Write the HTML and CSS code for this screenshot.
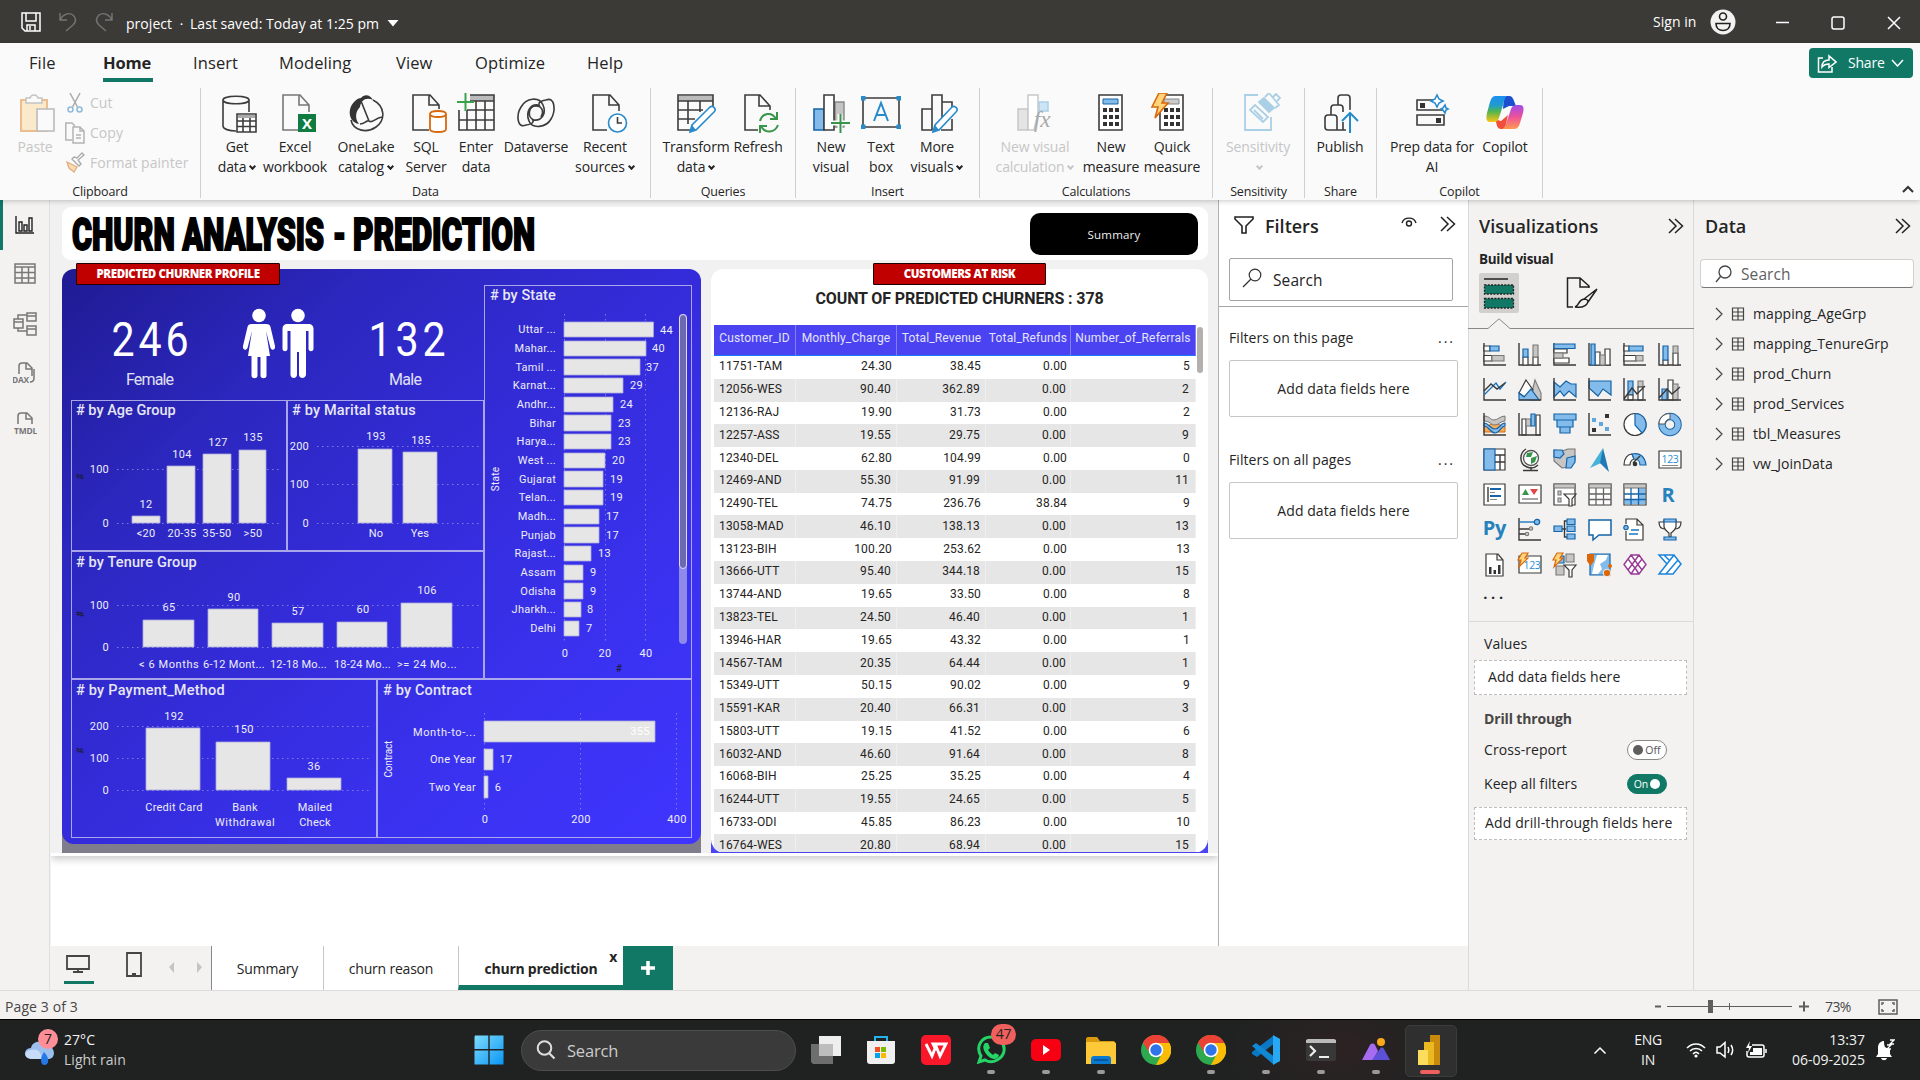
FILE: index.html
```html
<!DOCTYPE html>
<html lang="en">
<head>
<meta charset="utf-8">
<title>project - Power BI Desktop</title>
<link rel="stylesheet" href="styles.css">
</head>
<body>
<header class="titlebar">
  <svg class="tb-save" width="20" height="20" viewBox="0 0 20 20"><path class="lw" d="M1 1H19V19H4L1 16ZM5 1V9H15V1M6 19V13H14V19M9 14V18"/></svg>
  <svg class="tb-undo" width="18" height="20" viewBox="0 0 18 20"><path class="lg" d="M1 1V8H8M1 8C4 2 10 0 14 3C18 7 17 10 14 13L7 19"/></svg>
  <svg class="tb-redo" width="18" height="20" viewBox="0 0 18 20"><path class="lg" d="M17 1V8H10M17 8C14 2 8 0 4 3C0 7 1 10 4 13L11 19"/></svg>
  <span class="doc">project</span><span class="bull">•</span><span class="saved">Last saved: Today at 1:25 pm</span>
  <svg class="tb-caret" width="12" height="7" viewBox="0 0 12 7"><path fill="#fff" d="M.5 0H11.500L6 6.500Z"/></svg>
  <span class="signin">Sign in</span>
  <svg class="avatar" width="26" height="26" viewBox="0 0 26 26"><circle cx="13" cy="13" r="12.500" fill="#f3f2f1"/><circle cx="13" cy="7.500" r="3.500" fill="none" stroke="#222" stroke-width="1.600"/><path d="M6 14.500H20C20 19 17 21.500 13 21.500S6 19 6 14.500Z" fill="none" stroke="#222" stroke-width="1.600"/></svg>
  <svg class="wc" width="126" height="16" viewBox="0 0 126 16"><path class="lw" d="M1 7.500H14M113 2L125 14M125 2L113 14"/><rect class="lw" x="57" y="2" width="12" height="12" rx="2"/></svg>
</header>

<section class="ribbon">
  <nav class="menu">
    <span class="m1">File</span><span class="m2 on">Home</span><span class="m3">Insert</span><span class="m4">Modeling</span><span class="m5">View</span><span class="m6">Optimize</span><span class="m7">Help</span>
    <button class="share"><svg width="20" height="20" viewBox="0 0 20 20"><path class="lw" d="M6 5H1.500V19H15V14M5 14C5 9 8 7 12 7V3L19 9L12 14.500V11C9 11 7 11.500 5 14Z"/></svg><span>Share</span><svg width="13" height="8" viewBox="0 0 13 8"><path class="lw" d="M1 1L6.500 7L12 1"/></svg></button>
  </nav>
  <div class="groups">
    <div class="grp g-clip">
      <div class="tools">
        <div class="tool off"><svg class="r2" width="40" height="40" viewBox="0 0 40 40"><path fill="#fbe9cc" stroke="#edbd8e" stroke-width="2" d="M4 7H30V38H4Z"/><path fill="#fafafa" stroke="#c4c4c4" stroke-width="1.500" d="M9 10V5H13C14 1 20 1 21 5H25V10Z"/><path fill="#fafafa" stroke="#bbb" stroke-width="1.600" d="M20 16H37V38H20Z"/></svg><span>Paste</span></div>
        <div class="clip off">
          <div><svg width="20" height="22" viewBox="0 0 20 22"><path fill="none" stroke="#aaa" stroke-width="1.500" d="M5 1L12.500 15M15 1L7.500 15"/><circle cx="5.500" cy="17.500" r="2.500" fill="none" stroke="#91bcd9" stroke-width="1.600"/><circle cx="14.500" cy="17.500" r="2.500" fill="none" stroke="#91bcd9" stroke-width="1.600"/></svg><span>Cut</span></div>
          <div><svg width="20" height="22" viewBox="0 0 20 22"><path fill="none" stroke="#b4b4b4" stroke-width="1.500" d="M7 18H.8V1H7L10 4M8 5H15L19 9V21H8ZM15 5V9H19M11 13H16M11 16H16"/></svg><span>Copy</span></div>
          <div><svg width="20" height="22" viewBox="0 0 20 22"><path fill="#f8dcb4" stroke="#e2ae7e" stroke-width="1.300" d="M2 10L12 15L9 20L4 16Z"/><path fill="#fff" stroke="#aaa" stroke-width="1.400" d="M7 7L14 14L16 12L13 8L19 3L17 1L12 6L9 5Z"/></svg><span>Format painter</span></div>
        </div>
      </div>
      <div class="cap">Clipboard</div>
    </div>
    <div class="grp g-data">
      <div class="tools">
        <div class="tool"><svg class="r2" width="40" height="40" viewBox="0 0 40 40"><path class="d" d="M4 7C4 2 30 2 30 7S4 12 4 7V33C4 36 10 38 17 38M30 7V19"/><path fill="#fff" class="d" d="M18 21H37V39H18ZM18 28H37M18 33.500H37M24 25V39M31 25V39"/><path fill="#aaa" d="M19 22H36V25H19Z"/></svg><span>Get<br>data<i></i></span></div>
        <div class="tool"><svg class="r4" width="40" height="40" viewBox="0 0 40 40"><path class="gy" d="M20 37H4V2H21L30 12V19M20 2V12H30"/><path fill="#107c41" d="M19 21H37V39H19Z"/><text x="28" y="35.500" font-size="15" font-weight="700" fill="#fff" text-anchor="middle">X</text></svg><span>Excel<br>workbook</span></div>
        <div class="tool"><svg width="40" height="40" viewBox="0 0 40 40"><path fill="#333" d="M15 5C18 1 24 1 27 7C20 4 15 7 14 14C9 19 9 26 13 31C2 29 1 15 9 8C11 6 13 5 15 5Z"/><path class="d" d="M27 7C39 13 40 27 30 34C20 41 7 37 5 27M15 8L23 28C26 31 29 25 36 24M14 31C19 31 20 27 23 28"/></svg><span>OneLake<br>catalog<i></i></span></div>
        <div class="tool"><svg class="r3" width="40" height="40" viewBox="0 0 40 40"><path class="d" d="M20 37H4V2H21L30 12V16M20 2V12H30"/><path fill="#fff" stroke="#d9680c" stroke-width="1.800" d="M21 21C21 17 37 17 37 21S21 25 21 21V36C21 40 37 40 37 36V21"/></svg><span>SQL<br>Server</span></div>
        <div class="tool"><svg width="40" height="40" viewBox="0 0 40 40"><path fill="#bbb" d="M14 2H38V8H14Z"/><path class="d" d="M14 2H38V37H3V17M14 8H38M11 17V37M20 8V37M29 8V37M3 27H38M11 17H38"/><path stroke="#38a34c" stroke-width="2" d="M1 9H18M9.500 0V18"/></svg><span>Enter<br>data</span></div>
        <div class="tool"><svg width="40" height="40" viewBox="0 0 40 40"><path class="d" d="M10 32C1 36 0 22 5 14C10 5 23 3 27 12C31 21 25 28 18 27C11 25 12 13 20 13C27 13 28 20 25 24M30 7C39 3 40 18 35 26C30 35 16 36 13 28C9 18 15 11 22 12M10 32C18 31 18 28 16 26M30 7C22 8 22 11 24 14"/></svg><span>Dataverse</span></div>
        <div class="tool"><svg class="r4" width="40" height="40" viewBox="0 0 40 40"><path class="d" d="M18 37H4V2H21L30 12V18M20 2V12H30"/><circle cx="28.500" cy="30" r="9" fill="#fff" stroke="#268acb" stroke-width="1.600"/><path class="d" d="M28.500 24V30H33"/></svg><span>Recent<br>sources<i></i></span></div>
      </div>
      <div class="cap">Data</div>
    </div>
    <div class="grp g-query">
      <div class="tools">
        <div class="tool"><svg width="40" height="40" viewBox="0 0 40 40"><path fill="#bbb" d="M2 3H37V8H2Z"/><path class="d" d="M15 37H2V2H37V13M2 8H37M2 17H27M2 26H19M12 8V31M24 8V19"/><path class="pen" d="M14 39L16 32L34 14C37 12 41 16 38 19L20 37Z"/><path fill="#268acb" d="M14 39L16 32L20 37Z"/></svg><span>Transform<br>data<i></i></span></div>
        <div class="tool"><svg class="r3" width="40" height="40" viewBox="0 0 40 40"><path class="d" d="M17 37H4V2H19L29 13V17M18 2V13H29"/><path fill="none" stroke="#38964a" stroke-width="2" d="M19 28C21 20 31 18 35 26M36 19V26H29M37 32C34 40 24 41 20 33M19 40V33H26"/></svg><span>Refresh</span></div>
      </div>
      <div class="cap">Queries</div>
    </div>
    <div class="grp g-ins">
      <div class="tools">
        <div class="tool"><svg width="40" height="40" viewBox="0 0 40 40"><path fill="#83bceb" stroke="#1664a7" stroke-width="1.600" d="M3 16H13V37H3Z"/><path fill="#c4c4c4" stroke="#888" stroke-width="1.400" d="M24 9H33V34H24Z"/><path class="d" fill="#fff" d="M13 2H23V37H13Z"/><path stroke="#fafafa" stroke-width="5" d="M20 30H38M29 21V39"/><path stroke="#38964a" stroke-width="2" d="M20 30H39M29.500 21V40"/></svg><span>New<br>visual</span></div>
        <div class="tool"><svg width="40" height="40" viewBox="0 0 40 40"><path class="d" d="M2 5H38V34H2Z"/><path fill="#268acb" d="M0 3H4.500V7.500H0ZM35.500 3H40V7.500H35.500ZM0 31.500H4.500V36H0ZM35.500 31.500H40V36H35.500Z"/><path fill="none" stroke="#268acb" stroke-width="2" d="M13 28L20 10L27 28M15.500 22H24.500"/></svg><span>Text<br>box</span></div>
        <div class="tool"><svg class="r2" width="40" height="40" viewBox="0 0 40 40"><path class="d" d="M3 16H13V37H3ZM13 16V2H23V26M23 9H33V15M33 26V37H22"/><path class="pen" d="M14 39L16 32L33 14C36 12 40 16 37 19L20 37Z"/><path fill="#268acb" d="M14 39L16 32L20 37Z"/></svg><span>More<br>visuals<i></i></span></div>
      </div>
      <div class="cap">Insert</div>
    </div>
    <div class="grp g-calc">
      <div class="tools">
        <div class="tool off"><svg width="40" height="40" viewBox="0 0 40 40"><path fill="#e4e4e4" stroke="#c8c8c8" stroke-width="1.500" d="M3 16H13V37H3Z"/><path fill="#cde4f6" stroke="#a9cfe8" stroke-width="1.500" d="M24 9H33V18H24Z"/><path fill="#fff" stroke="#c8c8c8" stroke-width="1.500" d="M13 37V2H23V20L19 37Z"/><text x="19" y="34" font-size="23" font-style="italic" font-family="Liberation Serif, serif" fill="#a8a8a8">fx</text></svg><span>New visual<br>calculation<i></i></span></div>
        <div class="tool"><svg width="40" height="40" viewBox="0 0 40 40"><path class="d" fill="#fff" d="M8 2H31V37H8Z"/><path fill="#83bceb" stroke="#1664a7" d="M12 6H27V11H12Z"/><g id="keys" fill="#333"><path d="M12 15h4v4h-4zM18 15h4v4h-4zM24 15h4v4h-4zM12 22h4v4h-4zM18 22h4v4h-4zM24 22h4v4h-4zM12 29h4v4h-4zM18 29h4v4h-4zM24 29h4v4h-4z"/></g></svg><span>New<br>measure</span></div>
        <div class="tool"><svg class="l4" width="40" height="40" viewBox="0 0 40 40"><path class="d" fill="#fff" d="M12 2H35V37H12Z"/><path fill="#ccc" stroke="#888" d="M16 6H31V11H16Z"/><use href="#keys" x="4"/><path fill="#ffd47a" stroke="#d9680c" stroke-width="1.600" d="M11 0H19L14 10H20L7 25L10 14H4Z"/></svg><span>Quick<br>measure</span></div>
      </div>
      <div class="cap">Calculations</div>
    </div>
    <div class="grp g-sens">
      <div class="tools"><div class="tool off"><svg class="r3" width="40" height="40" viewBox="0 0 40 40"><g fill="none" stroke="#abd0e6" stroke-width="1.800"><path d="M17 2H4V37H30V24"/><path d="M9 17L14 12L27 24L22 29ZM13 17L22 26"/><path fill="#abd0e6" d="M18 9L23 5L33 15L28 19Z"/><path d="M24 4L28 0L38 12L34 15M32 4L35 1L39 5L36 8"/></g></svg><span>Sensitivity<br><i></i></span></div></div>
      <div class="cap">Sensitivity</div>
    </div>
    <div class="grp g-share">
      <div class="tools"><div class="tool"><svg class="r2" width="40" height="40" viewBox="0 0 40 40"><path class="d" d="M3 25C3 23 4 22 6 22H12C14 22 15 23 15 25V37H6C4 37 3 36 3 34ZM9 22V15C9 13 10 12 12 12H18C20 12 21 13 21 15V19M16 12V5C16 3 17 2 19 2H25C27 2 28 3 28 5V17M15 37H24M21 29V37"/><path fill="none" stroke="#fafafa" stroke-width="5" d="M28 40V21M21 27L28 20L35 27"/><path fill="none" stroke="#268acb" stroke-width="2" d="M28 40V21M20 28L28 20L36 28"/></svg><span>Publish</span></div></div>
      <div class="cap">Share</div>
    </div>
    <div class="grp g-cop">
      <div class="tools">
        <div class="tool"><svg width="40" height="40" viewBox="0 0 40 40"><path class="d" d="M22 7H5V17H32V15M5 22H32V32H5Z"/><path fill="#333" d="M8 10H13V15H8ZM24 25H29V30H24Z"/><path fill="#fff" stroke="#268acb" stroke-width="1.600" d="M25 2L27 6L31 8L27 10L25 14L23 10L19 8L23 6ZM33 12L34 15L36 16L34 17L33 20L31 17L29 16L31 15Z"/></svg><span>Prep data for<br>AI</span></div>
        <div class="tool"><svg width="40" height="40" viewBox="0 0 40 40"><defs><linearGradient id="c1" x1="0" y1="0" x2="0" y2="1"><stop offset="0" stop-color="#1d8ff0"/><stop offset=".35" stop-color="#1f9bd0"/><stop offset=".6" stop-color="#51b64c"/><stop offset="1" stop-color="#ffc415"/></linearGradient><linearGradient id="c2" x1="0" y1="0" x2="0" y2="1"><stop offset="0" stop-color="#a04be8"/><stop offset=".5" stop-color="#ee5299"/><stop offset="1" stop-color="#ff9a50"/></linearGradient></defs><path fill="#1b4fd0" d="M19 3H24C27 3 28 5 29 8L31 13H24L18 16Z"/><path fill="#f0503c" d="M9 26L16 28L23 22L20 36H16C12 36 12 32 11 29Z"/><path fill="url(#c1)" d="M10 3H22C20 4 19 8 18 12L14 25C13 28 11 29 8 29H5C1 29 1 25 2 20L5 9C6 5 8 3 10 3Z"/><path fill="url(#c2)" d="M32 12H35C39 12 39 16 38 20L35 30C34 34 32 36 29 36H17C20 35 21 31 22 28L26 16C27 13 29 12 32 12Z"/></svg><span>Copilot</span></div>
      </div>
      <div class="cap">Copilot</div>
    </div>
    <svg class="fold" width="12" height="8" viewBox="0 0 12 8"><path fill="none" stroke="#333" stroke-width="2" d="M1 7L6 2L11 7"/></svg>
  </div>
</section>

<main class="main">
  <aside class="rail">
    <svg width="24" height="24" viewBox="0 0 24 24"><path fill="none" stroke="#222" stroke-width="1.400" d="M3 4V21H21M6 10H9V19H6ZM11 13H14V19H11ZM16 6H19V19H16Z"/></svg>
    <svg width="24" height="24" viewBox="0 0 24 24"><path class="rl" d="M2 2H22V21H2ZM2 5H22M2 10.500H22M2 16H22M9 5V21M15.500 5V21"/></svg>
    <svg width="24" height="24" viewBox="0 0 24 24"><path class="rl" d="M1 7H10V16H1ZM1 10H10M14 1H23V9H14ZM14 4H23M14 14H23V23H14ZM14 17H23M5 7V3H14M5 16V19H14"/></svg>
    <svg width="24" height="24" viewBox="0 0 24 24"><path class="rl" d="M6 12V4C6 2 7 1 9 1H14L19 6V14M13 1V7H19M21 7V16C21 19 19 20 17 20"/><text x="-1" y="21" textLength="17" lengthAdjust="spacingAndGlyphs">DAX</text></svg>
    <svg width="24" height="24" viewBox="0 0 24 24"><path class="rl" d="M5 12V4C5 2 6 1 8 1H14L19 6V12M13 1V7H19"/><text x="1" y="22" textLength="23" lengthAdjust="spacingAndGlyphs">TMDL</text></svg>
  </aside>

  <section class="work">
    <div class="canvas">
      <div class="page">
        <div class="headcard">
          <svg class="headline" width="480" height="53" viewBox="0 0 480 53"><text x="10" y="42.500" textLength="252" lengthAdjust="spacingAndGlyphs">CHURN ANALYSIS</text><text x="271" y="42.500" textLength="13" lengthAdjust="spacingAndGlyphs">-</text><text x="291" y="42.500" textLength="182" lengthAdjust="spacingAndGlyphs">PREDICTION</text></svg>
          <button class="sumbtn">Summary</button>
        </div>
        <div class="cols">
          <div class="profwrap">
            <div class="tag tagl">PREDICTED CHURNER PROFILE</div>
            <div class="profile">
              <div class="upper">
                <div class="ucol">
                  <svg class="kpi" width="413" height="115" viewBox="71 285 413 115">
                    <text class="big" transform="translate(111.500 356) scale(.84 1)">246</text><text class="big" transform="translate(368.500 356) scale(.84 1)">132</text>
                    <text class="sub" x="126" y="384.500" textLength="48">Female</text><text class="sub" x="389" y="384.500" textLength="33">Male</text>
                    <g fill="#fff"><circle cx="259" cy="315.500" r="6.800"/><path d="M252 324H266C269 324 270 325 270.500 327L275 346C275.500 350 272 351 270.500 348L266 331L270 356H266.500V376C266 379 261 379 260.500 376V357H257.500V376C257 379 252 379 251.500 376V356H248L252 331L247.500 348C246 351 242.500 350 243 346L247.500 327C248 325 249 324 252 324Z"/><circle cx="298" cy="315.500" r="6.800"/><path d="M288 324H308C312 324 313.500 326 313.500 329V349C313 352 309 352 308.500 349V331H306V375C305 379 299.500 379 299 375V352H297V375C296.500 379 291 379 290.500 375V331H287.500V349C287 352 283 352 282.500 349V329C282.500 326 284 324 288 324Z"/></g>
                  </svg>
                  <div class="pair">
                    <svg class="chart" width="216" height="151" viewBox="71 400 216 151"><text class="t" x="76" y="410" textLength="100">&#35; by Age Group</text>
                      <path class="g" d="M117 469.500H280M117 523.500H280"/><g class="b"><path d="M132 516H160V523H132ZM167 466H195V523H167ZM203 454H231V523H203ZM239 450H266V523H239Z"/></g>
                      <g class="e"><text x="109" y="469">100</text><text x="109" y="523">0</text></g><g class="m"><text x="146" y="504">12</text><text x="182" y="454">104</text><text x="218" y="442">127</text><text x="253" y="437">135</text><text x="146" y="533">&lt;20</text><text x="182" y="533">20-35</text><text x="217" y="533">35-50</text><text x="253" y="533">&gt;50</text></g><text class="h" transform="translate(80 476.500) rotate(-90)">#</text></svg>
                    <svg class="chart" width="197" height="151" viewBox="287 400 197 151"><text class="t" x="292" y="410" textLength="124">&#35; by Marital status</text>
                      <path class="g" d="M317 446.500H480M317 484.500H480M317 523.500H480"/><path class="b" d="M358 449H392V523H358ZM403 452H437V523H403Z"/>
                      <g class="e"><text x="309" y="446">200</text><text x="309" y="484">100</text><text x="309" y="523">0</text></g><g class="m"><text x="376" y="436">193</text><text x="421" y="440">185</text><text x="376" y="533">No</text><text x="420" y="533">Yes</text></g></svg>
                  </div>
                  <svg class="chart" width="413" height="128" viewBox="71 551 413 128"><text class="t" x="76" y="562" textLength="121">&#35; by Tenure Group</text>
                    <path class="g" d="M117 605.500H480M117 647.500H480"/><path class="b" d="M143 620H194V647H143ZM208 609H258V647H208ZM272 623H323V647H272ZM337 622H387V647H337ZM401 603H452V647H401Z"/>
                    <g class="e"><text x="109" y="605">100</text><text x="109" y="647">0</text></g><g class="m"><text x="169" y="607">65</text><text x="234" y="597">90</text><text x="298" y="611">57</text><text x="363" y="609">60</text><text x="427" y="590">106</text></g>
                    <g><text x="139" y="664" textLength="60">&lt; 6 Months</text><text x="203" y="664" textLength="62">6-12 Mont...</text><text x="270" y="664" textLength="57">12-18 Mo...</text><text x="334" y="664" textLength="57">18-24 Mo...</text><text x="397" y="664" textLength="60">&gt;= 24 Mo...</text></g><text class="h" transform="translate(80 614) rotate(-90)">#</text></svg>
                </div>
                <svg class="chart state" width="208" height="394" viewBox="484 285 208 394"><text class="t" x="490" y="295" textLength="66">&#35; by State</text>
                  <path class="g" d="M564.500 314V644M605.500 314V644M645.500 314V644"/>
                  <path class="b" d="M564 322H653.500V337H564ZM564 341H646V356H564ZM564 359H640V375H564ZM564 378H623V393H564ZM564 397H613V412H564ZM564 415H611V431H564ZM564 434H611V449H564ZM564 453H605V468H564ZM564 471H603V487H564ZM564 490H603V505H564ZM564 509H599V524H564ZM564 527H599V543H564ZM564 546H591V561H564ZM564 565H583V580H564ZM564 583H583V599H564ZM564 602H581V617H564ZM564 621H579V636H564Z"/>
                  <g class="e"><text x="556" y="329">Uttar ...</text><text x="556" y="348">Mahar...</text><text x="556" y="367">Tamil ...</text><text x="556" y="385">Karnat...</text><text x="556" y="404">Andhr...</text><text x="556" y="423">Bihar</text><text x="556" y="441">Harya...</text><text x="556" y="460">West ...</text><text x="556" y="479">Gujarat</text><text x="556" y="497">Telan...</text><text x="556" y="516">Madh...</text><text x="556" y="535">Punjab</text><text x="556" y="553">Rajast...</text><text x="556" y="572">Assam</text><text x="556" y="591">Odisha</text><text x="556" y="609">Jharkh...</text><text x="556" y="628">Delhi</text></g>
                  <g><text x="660" y="330">44</text><text x="652" y="348">40</text><text x="646" y="367">37</text><text x="630" y="385">29</text><text x="620" y="404">24</text><text x="618" y="423">23</text><text x="618" y="441">23</text><text x="612" y="460">20</text><text x="610" y="479">19</text><text x="610" y="497">19</text><text x="606" y="516">17</text><text x="606" y="535">17</text><text x="598" y="553">13</text><text x="590" y="572">9</text><text x="590" y="591">9</text><text x="587" y="609">8</text><text x="586" y="628">7</text></g>
                  <g class="m"><text x="565" y="653">0</text><text x="605" y="653">20</text><text x="646" y="653">40</text><text class="v" transform="translate(495 479) rotate(-90)">State</text></g><text class="h" x="619" y="668">#</text>
                  <rect x="679" y="314" width="8" height="330" rx="4" fill="#8f89ea"/><rect x="679.500" y="314.500" width="7" height="254" rx="3.500" fill="#6d69ae" stroke="#dedcfa"/></svg>
              </div>
              <div class="pair">
                <svg class="chart" width="306" height="159" viewBox="71 679 306 159"><text class="t" x="76" y="690" textLength="149">&#35; by Payment_Method</text>
                  <path class="g" d="M117 726.500H371M117 758.500H371M117 790.500H371"/><path class="b" d="M146 728H200V790H146ZM216 742H270V790H216ZM287 778H341V790H287Z"/>
                  <g class="e"><text x="109" y="726">200</text><text x="109" y="758">100</text><text x="109" y="790">0</text></g><g class="m"><text x="174" y="716">192</text><text x="244" y="729">150</text><text x="314" y="766">36</text><text x="174" y="807">Credit Card</text><text x="245" y="807">Bank</text><text x="245" y="822" textLength="60">Withdrawal</text><text x="315" y="807">Mailed</text><text x="315" y="822">Check</text></g><text class="h" transform="translate(80 750.500) rotate(-90)">#</text></svg>
                <svg class="chart last" width="315" height="159" viewBox="377 679 315 159"><text class="t" x="383" y="690" textLength="89">&#35; by Contract</text>
                  <path class="g" d="M484.500 713V812M580.500 713V812M676.500 713V812"/><path class="b" d="M484 721H655V742H484ZM484 749H493V770H484ZM484 776H488V798H484Z"/>
                  <g class="e"><text x="476" y="732" textLength="63">Month-to-...</text><text x="476" y="759">One Year</text><text x="476" y="787">Two Year</text></g><g class="m"><text class="in" x="640" y="731">355</text><text x="506" y="759">17</text><text x="498" y="787">6</text><text x="485" y="819">0</text><text x="581" y="819">200</text><text x="677" y="819">400</text><text class="v" transform="translate(388 759) rotate(-90)" textLength="37">Contract</text></g></svg>
              </div>
            </div>
          </div>
          <div class="riskwrap">
            <div class="tag tagr">CUSTOMERS AT RISK</div>
            <div class="risk">
              <div class="count">COUNT OF PREDICTED CHURNERS : 378</div>
              <div class="tblrow">
              <table>
                <thead><tr><th>Customer_ID</th><th>Monthly_Charge</th><th>Total_Revenue</th><th>Total_Refunds</th><th>Number_of_Referrals</th></tr></thead>
                <tbody>
                <tr><td>11751-TAM</td><td>24.30</td><td>38.45</td><td>0.00</td><td>5</td></tr>
                <tr><td>12056-WES</td><td>90.40</td><td>362.89</td><td>0.00</td><td>2</td></tr>
                <tr><td>12136-RAJ</td><td>19.90</td><td>31.73</td><td>0.00</td><td>2</td></tr>
                <tr><td>12257-ASS</td><td>19.55</td><td>29.75</td><td>0.00</td><td>9</td></tr>
                <tr><td>12340-DEL</td><td>62.80</td><td>104.99</td><td>0.00</td><td>0</td></tr>
                <tr><td>12469-AND</td><td>55.30</td><td>91.99</td><td>0.00</td><td>11</td></tr>
                <tr><td>12490-TEL</td><td>74.75</td><td>236.76</td><td>38.84</td><td>9</td></tr>
                <tr><td>13058-MAD</td><td>46.10</td><td>138.13</td><td>0.00</td><td>13</td></tr>
                <tr><td>13123-BIH</td><td>100.20</td><td>253.62</td><td>0.00</td><td>13</td></tr>
                <tr><td>13666-UTT</td><td>95.40</td><td>344.18</td><td>0.00</td><td>15</td></tr>
                <tr><td>13744-AND</td><td>19.65</td><td>33.50</td><td>0.00</td><td>8</td></tr>
                <tr><td>13823-TEL</td><td>24.50</td><td>46.40</td><td>0.00</td><td>1</td></tr>
                <tr><td>13946-HAR</td><td>19.65</td><td>43.32</td><td>0.00</td><td>1</td></tr>
                <tr><td>14567-TAM</td><td>20.35</td><td>64.44</td><td>0.00</td><td>1</td></tr>
                <tr><td>15349-UTT</td><td>50.15</td><td>90.02</td><td>0.00</td><td>9</td></tr>
                <tr><td>15591-KAR</td><td>20.40</td><td>66.31</td><td>0.00</td><td>3</td></tr>
                <tr><td>15803-UTT</td><td>19.15</td><td>41.52</td><td>0.00</td><td>6</td></tr>
                <tr><td>16032-AND</td><td>46.60</td><td>91.64</td><td>0.00</td><td>8</td></tr>
                <tr><td>16068-BIH</td><td>25.25</td><td>35.25</td><td>0.00</td><td>4</td></tr>
                <tr><td>16244-UTT</td><td>19.55</td><td>24.65</td><td>0.00</td><td>5</td></tr>
                <tr><td>16733-ODI</td><td>45.85</td><td>86.23</td><td>0.00</td><td>10</td></tr>
                <tr><td>16764-WES</td><td>20.80</td><td>68.94</td><td>0.00</td><td>15</td></tr>
                </tbody>
              </table>
              <div class="thumb"></div>
              </div>
            </div>
          </div>
        </div>
      </div>
    </div>
    <div class="filters">
      <div class="fhead"><svg width="20" height="19" viewBox="0 0 20 19"><path fill="none" stroke="#222" stroke-width="1.600" d="M1 1H19V3L12 10V17H8V10L1 3Z"/></svg><b>Filters</b><svg class="eye" width="16" height="12" viewBox="0 0 16 12"><path fill="none" stroke="#222" stroke-width="1.400" d="M1 7C3 .5 13 .5 15 7"/><circle cx="8" cy="7.500" r="2.500" fill="none" stroke="#222" stroke-width="1.400"/></svg><svg width="16" height="16" viewBox="0 0 16 16"><path class="ch" d="M1 1L8 8L1 15M7 1L14.500 8L7 15"/></svg></div>
      <div class="fsearch"><svg width="20" height="20" viewBox="0 0 20 20"><circle cx="13" cy="7" r="5.800" fill="none" stroke="#333" stroke-width="1.200"/><path stroke="#333" stroke-width="1.200" d="M9 11L1 19"/></svg><span>Search</span></div>
      <div class="fbody">
        <div class="flab"><span>Filters on this page</span><span class="dots">...</span></div><div class="fbox">Add data fields here</div>
        <div class="flab two"><span>Filters on all pages</span><span class="dots">...</span></div><div class="fbox">Add data fields here</div>
      </div>
    </div>
    <nav class="tabs">
      <svg class="dev" width="161" height="44" viewBox="50 946 161 44"><path fill="none" stroke="#444" stroke-width="1.800" d="M67 956H89V969H67ZM78 969V972M73 972H83M127 953H141V976H127ZM132 974H136"/><path fill="#117865" d="M64 981H94V984H64Z"/><path fill="#c4c4c4" d="M169 967L174 962V973ZM202 967L197 962V973Z"/></svg>
      <span class="tab ta">Summary</span><span class="tab tbb">churn reason</span><span class="tab tc">churn prediction<em>x</em></span><span class="plus"><svg width="16" height="16" viewBox="0 0 16 16"><path stroke="#fff" stroke-width="3.500" d="M8 1V15M1 8H15"/></svg></span>
    </nav>
  </section>

  <section class="viz">
    <div class="phead"><b>Visualizations</b><svg width="16" height="16" viewBox="0 0 16 16"><path class="ch" d="M1 1L8 8L1 15M7 1L14.500 8L7 15"/></svg></div>
    <div class="build">Build visual</div>
    <div class="modes"><span class="mode"><svg width="32" height="32" viewBox="0 0 32 32"><path stroke="#222" stroke-width="1.500" d="M1 2H25"/><path fill="#117865" stroke="#222" stroke-width="1.300" stroke-dasharray="2 1.300" d="M1.500 8H30.500V17H1.500ZM1.500 21.500H30.500V31H1.500Z"/></svg></span><svg class="fmt" width="32" height="32" viewBox="0 0 32 32"><path fill="none" stroke="#222" stroke-width="1.500" d="M7 30H1.500V1H14L23 9V11M14 1V10H23M31 12L18 22M31 12L22 25M18 22C22 22 22 25 22 25C20 30 16 31 9 30C13 29 12 23 18 22Z"/></svg></div>
    <svg class="notch" width="226" height="12" viewBox="0 0 226 12"><path fill="none" stroke="#8a8886" d="M0 10.500H20L31 .8L42 10.500H226"/></svg>
    <div class="icons">
      <svg viewBox="0 0 24 24"><path class="a" d="M1 0V22H23"/><path class="w" d="M1 3H7V8H1ZM1 12.500H9V18H1Z"/><path class="bl" d="M7 3H16V8H7Z"/><path class="gr" d="M9 12.500H21V18H9Z"/></svg>
      <svg viewBox="0 0 24 24"><path class="a" d="M1 0V22H23"/><path class="w" d="M5 14H10V22H5ZM15 14H20V22H15Z"/><path class="bl" d="M5 6H10V14H5Z"/><path class="gr" d="M15 2H20V14H15Z"/></svg>
      <svg viewBox="0 0 24 24"><path class="a" d="M1 0V22H23"/><path class="w" d="M1 6H14V10H1ZM1 15H16V20H1Z"/><path class="bl" d="M1 1H22V5.500H1Z"/><path class="gr" d="M1 10H10V15H1Z"/></svg>
      <svg viewBox="0 0 24 24"><path class="a" d="M1 0V22H23"/><path class="w" d="M7 9H12V22H7ZM17 6H22V22H17Z"/><path class="bl" d="M3 1H7V22H3Z"/><path class="gr" d="M12 12H17V22H12Z"/></svg>
      <svg viewBox="0 0 24 24"><path class="a" d="M1 0V22H23"/><path class="w" d="M1 3H6V8H1ZM1 12.500H13V18H1Z"/><path class="bl" d="M6 3H20V8H6Z"/><path class="gr" d="M13 12.500H20V18H13Z"/></svg>
      <svg viewBox="0 0 24 24"><path class="a" d="M1 0V22H23"/><path class="w" d="M5 17H10V22H5ZM15 10H20V22H15Z"/><path class="bl" d="M5 3H10V17H5Z"/><path class="gr" d="M15 3H20V10H15Z"/></svg>

      <svg viewBox="0 0 24 24"><path class="a" d="M1 0V22H23"/><path class="bs" d="M1 17L13 5L17 11L23 4"/><path class="a" d="M1 13L8 6L14 11L22 5"/></svg>
      <svg viewBox="0 0 24 24"><path class="gr" d="M17 2L23 15V22H12Z"/><path class="w" d="M8 2L15 12L8 20L1 15Z"/><path class="bl" d="M1 15L6 19L13 11L21 22H1Z"/><path class="a" d="M1 22H23"/></svg>
      <svg viewBox="0 0 24 24"><path class="bl" d="M1 4L7 9L13 3L18 6H23V19L16 13L11 18L7 13L1 19Z"/><path class="a" d="M1 0V22H23"/></svg>
      <svg viewBox="0 0 24 24"><path class="bl" d="M1 3H23V17L15 11L10 18L1 10Z"/><path class="a" d="M1 0V22H23"/></svg>
      <svg viewBox="0 0 24 24"><path class="bl" d="M5 3H10V17H5Z"/><path class="gr" d="M15 3H20V9H15Z"/><path class="w" d="M5 17H10V22H5ZM15 9H20V22H15Z"/><path class="a" d="M1 0V22H23M1 21L9 10L14 16L22 8"/></svg>
      <svg viewBox="0 0 24 24"><path class="bl" d="M4 11H9V22H4Z"/><path class="w" d="M10 2H15V22H10Z"/><path class="gr" d="M15 6H20V22H15Z"/><path class="a" d="M1 0V22H23M1 20L9 11L14 16L22 9"/></svg>

      <svg viewBox="0 0 24 24"><path fill="#f6ac58" stroke="#d9680c" d="M1 14C5 14 6 11 10 11H14C18 11 18 14 22 14V19H15L12 16L9 19H1Z"/><path fill="#c8c6c4" stroke="#777" d="M1 3C7 3 7 7 11 7S17 3 22 3V8C17 8 16 12 12 12S7 8 1 8Z"/><path class="bl" d="M1 10C6 10 7 16 12 16S17 10 22 10V13C18 13 17 20 12 20S6 13 1 13Z"/><path class="a" d="M1 0V22H23"/></svg>
      <svg viewBox="0 0 24 24"><path class="w" d="M4 6H8V22H4ZM18 2H22V22H18Z"/><path class="gr" d="M8 6H13V13H8Z"/><path class="bl" d="M13 1H17V13H13Z"/><path class="a" d="M1 0V22H23"/></svg>
      <svg viewBox="0 0 24 24"><path class="bl" d="M1 1H23V7H1ZM4 7H20V14H4ZM7 14H17V20H7Z"/></svg>
      <svg viewBox="0 0 24 24"><path class="a" d="M1 0V22H23"/><path fill="#5ea7df" d="M4 5h4v4H4zM11 9h4v4h-4zM17 14h4v4h-4z"/><path fill="#333" d="M17 1h4v4h-4zM4 15h4v4H4z"/></svg>
      <svg viewBox="0 0 24 24"><circle class="w" cx="12" cy="11.500" r="11"/><path class="bl" d="M12 .5A11 11 0 0 1 19 20L12 12Z"/></svg>
      <svg viewBox="0 0 24 24"><circle cx="12" cy="11.500" r="8" fill="none" stroke="#1664a7" stroke-width="7.500"/><circle cx="12" cy="11.500" r="8" fill="none" stroke="#83bceb" stroke-width="5.500"/><path fill="#fff" stroke="#555" d="M12 .5V6A5 5 0 0 0 7 11H1C1 5 6 .5 12 .5Z"/></svg>

      <svg viewBox="0 0 24 24"><path class="w" d="M1 1H22V22H1Z"/><path class="bl" d="M1 1H12V22H1Z"/><path class="a" d="M12 7H22M17 7V22M12 14H22"/></svg>
      <svg viewBox="0 0 24 24"><circle cx="13" cy="10" r="7.500" fill="#fff" stroke="#555" stroke-width="1.300"/><path fill="#38964a" d="M9 5L15 4L13 9L8 9ZM13 10L19 8L17 14L13 16Z"/><path class="a" d="M8 1C1 5 1 16 9 19C14 21 18 19 20 17M13 19V22M5 22.500H20"/></svg>
      <svg viewBox="0 0 24 24"><path class="gr" d="M1 2L9 3L15 1H22V12L17 19L9 20L1 13Z"/><path class="bl" d="M1 2H9L11 6L7 10L1 9ZM14 10L22 8V14L18 20H13Z"/></svg>
      <svg viewBox="0 0 24 24"><path fill="#45b3d8" d="M15 0L2 20L13 15Z"/><path fill="#2078b4" d="M15 0L21 24L12 15Z"/></svg>
      <svg viewBox="0 0 24 24"><path class="w" d="M1 17C1 10 5 6 9 6L11 11C8 12 7 14 7 17Z"/><path class="bl" d="M9 6C17 4 22 9 23 17H17C17 13 14 11 11 11Z"/><path class="a" d="M10 15L17 8"/><circle cx="12" cy="16" r="2.300" fill="#333"/></svg>
      <svg viewBox="0 0 24 24"><path class="w" d="M1 3H23V20H1Z"/><text x="12" y="14.500">123</text><path stroke="#888" d="M4 17.500H20"/></svg>

      <svg viewBox="0 0 24 24"><path class="w" d="M1 1H22V22H1Z"/><path class="a" d="M5 4V19" /><path stroke="#1664a7" stroke-width="1.800" d="M7 6H18M7 13H18"/><path stroke="#888" d="M7 9.500H12M7 16.500H14"/></svg>
      <svg viewBox="0 0 24 24"><path class="w" d="M1 2H23V20H1Z"/><path fill="#38964a" d="M4 12L7.500 6L11 12Z"/><path fill="#e04848" d="M12 6H20L16 12Z"/><path stroke="#888" stroke-width="1.500" d="M4 16H20"/></svg>
      <svg viewBox="0 0 24 24"><path class="w" d="M1 1H22V22H1Z"/><path class="gr" d="M1 1H22V5H1ZM5 8H8V12H5ZM5 15H8V19H5Z"/><path class="w" d="M11 11H23L19 16V23H16V16Z"/></svg>
      <svg viewBox="0 0 24 24"><path class="w" d="M1 1H23V22H1Z"/><path class="gr" d="M1 1H23V5H1Z"/><path stroke="#666" fill="none" stroke-width="1.300" d="M8 5V22M15.500 5V22M1 11H23M1 16.500H23"/></svg>
      <svg viewBox="0 0 24 24"><path class="w" d="M1 1H23V22H1Z"/><path fill="#83bceb" d="M15 5H22V21H2V16H15Z"/><path class="gr" d="M1 1H23V5H1Z"/><path stroke="#1664a7" fill="none" stroke-width="1.300" d="M8 5V22M15.500 5V22M1 11H23M1 16.500H23"/></svg>
      <svg viewBox="0 0 24 24"><text class="lang" x="10" y="19">R</text></svg>

      <svg viewBox="0 0 24 24"><text class="lang" x="11.500" y="16.500">Py</text></svg>
      <svg viewBox="0 0 24 24"><path class="a" d="M1 0V22H23M1 11H12M1 16H7"/><path class="bs" d="M1 4H17"/><circle class="bl" cx="19" cy="4" r="2.700"/><circle class="gr" cx="13" cy="10.500" r="1.700"/><circle class="gr" cx="9" cy="16" r="1.700"/></svg>
      <svg viewBox="0 0 24 24"><path class="a" d="M9 11H13M14 3H11.500V19H14"/><path class="bl" d="M1 8H9V13.500H1ZM14 1H22V6.500H14ZM14 8H22V13.500H14ZM14 16H22V21H14Z"/></svg>
      <svg viewBox="0 0 24 24"><path fill="#fff" stroke="#1664a7" stroke-width="1.500" d="M1 2H23V17H11L5 22V17H1Z"/></svg>
      <svg viewBox="0 0 24 24"><path class="w" d="M3 6V1H14L20 7V22H3V13M14 1V7H20"/><circle class="bl" cx="3" cy="9.500" r="2.200"/><path class="bs" d="M8 12H16M6 16H15"/></svg>
      <svg viewBox="0 0 24 24"><path class="w" d="M6 2H18V9C17 13 14 14 13 15V19H11V15C10 14 7 13 6 9ZM6 4H1C1 9 3 11 7 11M18 4H23C23 9 21 11 17 11"/><path class="bl" d="M6 1H18V4H6ZM6 19H18V22H6Z"/></svg>

      <svg viewBox="0 0 24 24"><path class="w" d="M3 1H15L20 7V23H3ZM14 1V7H20"/><path fill="#333" d="M6 14h2.500v7H6zM10.500 17H13v4h-2.500zM15 12h2.500v9H15z"/></svg>
      <svg viewBox="0 0 24 24"><path class="w" d="M1 3H23V20H1Z"/><text x="14" y="16">123</text><path class="bo" d="M4 0H10L7 5H10L1 14L3 7H0Z"/></svg>
      <svg viewBox="0 0 24 24"><path class="gr" d="M13 1H21V9H13ZM3 13H11V22H3Z"/><path class="bl" d="M5 3H11V10H5Z"/><path class="w" d="M11 12H23L19 17V24H16V17Z"/><path class="bo" d="M4 0H10L7 5H10L1 14L3 7H0Z"/></svg>
      <svg viewBox="0 0 24 24"><path class="bl" d="M2 1H22V22H2Z"/><path fill="#fff" d="M9 2H20L18 7L12 11L14 16L10 21H4L6 12Z"/><path fill="#d9680c" d="M-1 1H6V8L2.500 13L-1 8Z"/><circle cx="19" cy="20" r="3.800" fill="#d9680c" stroke="#f3f2f1"/><circle cx="22" cy="13" r="2" fill="#d9680c"/></svg>
      <svg viewBox="0 0 24 24"><path fill="#fff" stroke="#963a96" stroke-width="1.400" d="M1 11.500L8 2H16L23 11.500L16 21H8ZM8 2L5 6L12 15L8 21M16 2L19 6L12 15L16 21M1 11.500L8 2L12 7.500L5 17M23 11.500L19 17L12 7.500L16 2"/></svg>
      <svg viewBox="0 0 24 24"><path fill="#fff" stroke="#1a84dc" stroke-width="1.500" d="M1 2H16L23 11L15 21H1L9 11ZM16 2L5 16M20 7L8 21M6 2L12 8"/></svg>
    </div>
    <div class="more">...</div>
    <div class="wells">
      <div class="wl">Values</div><div class="well">Add data fields here</div>
      <div class="drill">Drill through</div>
      <div class="tog"><span>Cross-report</span><span class="sw"><u></u>Off</span></div>
      <div class="tog t2"><span>Keep all filters</span><span class="sw swon">On<u></u></span></div>
      <div class="well w2">Add drill-through fields here</div>
    </div>
  </section>

  <section class="data">
    <div class="phead"><b>Data</b><svg width="16" height="16" viewBox="0 0 16 16"><path class="ch" d="M1 1L8 8L1 15M7 1L14.500 8L7 15"/></svg></div>
    <div class="dsearch"><svg width="18" height="18" viewBox="0 0 18 18"><circle cx="10" cy="7" r="6" fill="none" stroke="#444" stroke-width="1.300"/><path stroke="#444" stroke-width="1.300" d="M5.500 11.500L1 17"/></svg><span>Search</span></div>
    <ul>
      <li><svg class="tr" viewBox="0 0 30 16"><path d="M1 2L7 8L1 14M17.500 2H28.500V14H17.500ZM17.500 6H28.500M17.500 10H28.500M23 2V14"/></svg>mapping_AgeGrp</li>
      <li><svg class="tr" viewBox="0 0 30 16"><path d="M1 2L7 8L1 14M17.500 2H28.500V14H17.500ZM17.500 6H28.500M17.500 10H28.500M23 2V14"/></svg>mapping_TenureGrp</li>
      <li><svg class="tr" viewBox="0 0 30 16"><path d="M1 2L7 8L1 14M17.500 2H28.500V14H17.500ZM17.500 6H28.500M17.500 10H28.500M23 2V14"/></svg>prod_Churn</li>
      <li><svg class="tr" viewBox="0 0 30 16"><path d="M1 2L7 8L1 14M17.500 2H28.500V14H17.500ZM17.500 6H28.500M17.500 10H28.500M23 2V14"/></svg>prod_Services</li>
      <li><svg class="tr" viewBox="0 0 30 16"><path d="M1 2L7 8L1 14M17.500 2H28.500V14H17.500ZM17.500 6H28.500M17.500 10H28.500M23 2V14"/></svg>tbl_Measures</li>
      <li><svg class="tr" viewBox="0 0 30 16"><path d="M1 2L7 8L1 14M17.500 2H28.500V14H17.500ZM17.500 6H28.500M17.500 10H28.500M23 2V14"/></svg>vw_JoinData</li>
    </ul>
  </section>
</main>

<footer class="status"><span>Page 3 of 3</span>
  <svg width="160" height="20" viewBox="1650 996 160 20"><path stroke="#605e5c" stroke-width="2" d="M1655 1005.500H1661M1799 1005.500H1809M1804 1000.500V1010.500"/><path stroke="#605e5c" d="M1667 1005.500H1792M1729.500 1002V1009"/><path fill="#605e5c" d="M1708 999H1713V1012H1708Z"/></svg>
  <span class="pct">73%</span><svg width="20" height="16" viewBox="0 0 20 16"><path fill="none" stroke="#605e5c" stroke-width="1.500" d="M1 1H19V15H1ZM4 6V4H6M14 4H16V6M4 10V12H6M14 12H16V10"/></svg>
</footer>

<footer class="taskbar">
  <div class="weather"><svg width="34" height="40" viewBox="0 0 34 40"><path fill="#9cc0ee" d="M7 31C-2 30 0 20 7 20C8 13 18 11 21 18C31 16 33 30 25 31Z"/><path fill="#c6dcf8" d="M7 31C-1 30 0 22 8 22C13 20 18 24 17 31Z"/><path fill="#2478ea" d="M20 24C26 30 25 37 20.500 37S16 30 20 24Z"/><circle cx="24" cy="11" r="10" fill="#ff8e98"/><text x="24" y="16" font-size="14" text-anchor="middle" fill="#222">7</text></svg><div>27°C<br><span>Light rain</span></div></div>
  <div class="start"><svg width="30" height="30" viewBox="0 0 30 30"><defs><linearGradient id="w" x1="0" y1="0" x2="1" y2="1"><stop offset="0" stop-color="#7edcfc"/><stop offset="1" stop-color="#0a96f4"/></linearGradient></defs><path fill="url(#w)" d="M1 .5H14.300V14H.5V2ZM15.700 .5H29.500V14H15.700ZM.5 15.500H14.300V29.500H.5ZM15.700 15.500H29.500V29.500H15.700Z"/></svg></div>
  <div class="tsearch"><svg width="20" height="20" viewBox="0 0 20 20"><circle cx="8.500" cy="8" r="6.800" fill="none" stroke="#ddd" stroke-width="2"/><path stroke="#ddd" stroke-width="2.200" d="M13 13L18.500 18.500"/></svg><span>Search</span></div>
  <div class="apps">
    <div><svg viewBox="0 0 30 30"><path fill="#6e6e6e" d="M0 9H22V29H2L0 27Z"/><path fill="#eee" d="M8 1H30V21H8Z"/><path fill="#bdbdbd" d="M8 9H22V21H8Z"/></svg></div>
    <div><svg viewBox="0 0 30 30"><path fill="none" stroke="#24b4ea" stroke-width="2" d="M9 7V2H21V7"/><path fill="#f0f0f0" d="M1 6H29V26C29 28 28 29 26 29H4C2 29 1 28 1 26Z"/><path fill="#f25022" d="M9 12h5v5H9z"/><path fill="#7fba00" d="M15 12h5v5h-5z"/><path fill="#00a4ef" d="M9 18h5v5H9z"/><path fill="#ffb900" d="M15 18h5v5h-5z"/></svg></div>
    <div><svg viewBox="0 0 30 30"><rect width="30" height="30" rx="5" fill="#f8182a"/><path fill="none" stroke="#fff" stroke-width="2.800" d="M5 9L11 21L15 11L19 21L25 9H12L14 13"/></svg></div>
    <div class="run"><svg viewBox="0 0 30 30"><path fill="none" stroke="#25d366" stroke-width="3" d="M3 27L5 21C-1 11 6 2 15 2S29 9 28 16S17 30 9 25Z"/><path fill="#25d366" d="M9 8L12 8L14 13L12 15C14 18 16 19 17 20L19 18L23 20C22 25 16 25 12 21C7 16 6 11 9 8Z"/></svg><b>47</b></div>
    <div class="run"><svg viewBox="0 0 30 30"><rect y="4" width="30" height="22" rx="5" fill="#f80014"/><path fill="#fff" d="M12 10L19 15L12 20Z"/></svg></div>
    <div class="run"><svg viewBox="0 0 30 30"><path fill="#d99a10" d="M0 4C0 3 1 2 2 2H11L14 6H28L30 9H0Z"/><path fill="#fdc938" d="M0 7H28C29 7 30 8 30 9V29H0Z"/><path fill="#0a7ad0" d="M5 24C5 22 6 21 8 21H22C24 21 25 22 25 24V29H5Z"/><path stroke="#064f8e" stroke-width="1.500" d="M8 25H22"/></svg></div>
    <div><svg viewBox="0 0 30 30"><g id="chrome"><circle cx="15" cy="15" r="15" fill="#2da94f"/><path fill="#ea4335" d="M2 7.500A15 15 0 0 1 28.500 8H15A7 7 0 0 0 8.500 18Z"/><path fill="#fbbc05" d="M28.500 8A15 15 0 0 1 15 30L21 18.500A7 7 0 0 0 15 8Z"/><circle cx="15" cy="15" r="7.300" fill="#fff"/><circle cx="15" cy="15" r="5.700" fill="#2f74e8"/></g></svg></div>
    <div class="run"><svg viewBox="0 0 30 30"><use href="#chrome"/></svg></div>
    <div class="run"><svg viewBox="0 0 30 30"><path fill="#0a78c4" d="M22 1L29 4L6 22L1 19V17Z"/><path fill="#1088d4" d="M1 11L5 8L29 26L22 29Z"/><path fill="#29a8f4" d="M22 0L29 4V26L22 30Z"/></svg></div>
    <div class="run"><svg viewBox="0 0 30 30"><rect y="4" width="30" height="22" rx="2" fill="#383838"/><path fill="#bbb" d="M0 8V5L2 4H28L30 5V8Z"/><path fill="none" stroke="#eee" stroke-width="2.200" d="M4 11L9 16L4 21M13 22H23"/></svg></div>
    <div class="run"><svg viewBox="0 0 30 30"><path fill="#a66bf0" d="M1 25L9 10C10 8 13 8 14 10L17 16L12 25Z"/><path fill="#5c50d8" d="M11 25L19 14C20 12 22 12 23 14L29 25Z"/><circle cx="20" cy="7" r="4" fill="#fba919"/></svg></div>
    <div class="run cur"><svg viewBox="0 0 30 30"><path fill="#c8890c" d="M14 0H24V30H14Z"/><path fill="#eab820" d="M8 7H18V30H8Z"/><path fill="#fbdc5c" d="M2 15H12V30H2Z"/></svg></div>
  </div>
  <div class="tray"><svg width="14" height="9" viewBox="0 0 14 9"><path class="lw" d="M1.500 7.500L7 2L12.500 7.500"/></svg><div class="lang">ENG<br>IN</div>
    <svg width="20" height="16" viewBox="0 0 20 16"><path class="lw" d="M1 6C6 .5 14 .5 19 6M4 9C7 5.500 13 5.500 16 9M7 12C9 9.500 11 9.500 13 12"/><circle cx="10" cy="14" r="1.600" fill="#fff"/></svg>
    <svg width="20" height="18" viewBox="0 0 20 18"><path class="lw" d="M1 6H4L9 1.500V16L4 12H1ZM12 6C13 8 13 10 12 12M15 4C17 7 17 11 15 14"/></svg>
    <svg width="21" height="18" viewBox="0 0 21 18"><path class="lw" d="M6 4H16C17 4 18 5 18 6V14C18 15 17 16 16 16H3C2 16 1 15 1 14V10M20 8V12"/><path fill="#fff" d="M7 7H16V14H4V11H7ZM4 0L0 7H3L2 12L6 5H3Z"/></svg>
    <div class="clock">13:37<br>06-09-2025</div>
    <svg width="19" height="22" viewBox="0 0 19 22"><path fill="#fff" d="M2 9C2 4 5 2 8 2C8 8 9 9 14 10V15L16 18H0L2 15ZM5 19H11C10 22 6 22 5 19Z"/><path fill="none" stroke="#fff" stroke-width="1.300" d="M11 6H15L11 10H15M14 1H18L14 5H18"/></svg>
  </div>
</footer>
</body>
</html>
```
FILE: styles.css
```css
*{box-sizing:border-box}
html,body{margin:0;width:1920px;height:1080px;overflow:hidden}
body{font-family:"Open Sans","Noto Sans",sans-serif;font-size:14px;letter-spacing:-.2px;color:#242424;background:#f3f2f1;display:flex;flex-direction:column}
svg{display:block;flex:none}
button{font:inherit;letter-spacing:inherit;border:0;padding:0}
.lw{fill:none;stroke:#fff;stroke-width:1.5}
.lg{fill:none;stroke:#777573;stroke-width:1.4}
.d{fill:none;stroke:#3c3c3c;stroke-width:1.6}
.d[fill]{fill:#fff}
.gy{fill:none;stroke:#777;stroke-width:1.6}
.pen{fill:#fff;stroke:#268acb;stroke-width:1.6}

/* title bar */
.titlebar{height:43px;flex:none;background:#3b3a37;color:#fff;display:flex;align-items:flex-start;padding-left:21px;white-space:nowrap}
.titlebar span{line-height:20px;margin-top:14px;letter-spacing:.04px}
.tb-save{margin-top:12px}.tb-undo{margin:12px 0 0 18px}.tb-redo{margin:12px 0 0 18px}
.titlebar .doc{margin-left:13px;width:47px}.titlebar .bull{width:17px;text-align:center;font-size:8px}
.titlebar .saved{width:189px}
.tb-caret{margin:20px 0 0 8px}
.titlebar .signin{margin-left:auto;width:45px;margin-top:12px}
.avatar{margin:9px 0 0 12px}
.wc{margin:15px 19px 0 39px}

/* ribbon */
.ribbon{height:157px;flex:none;background:#fafafa;box-shadow:0 1px 5px rgba(0,0,0,.22);z-index:2;position:relative}
.menu{height:45px;display:flex;font-size:16.5px;letter-spacing:.1px;padding-left:29px;line-height:40px;white-space:nowrap}
.menu span{height:39px}
.m1{width:74px}.m3{width:86px}.m4{width:117px}.m5{width:79px}.m6{width:112px}
.menu .m2{width:50px;margin-right:40px;font-weight:700;letter-spacing:-.15px;border-bottom:4px solid #117865}
.share{margin:5px 7px 0 auto;width:104px;height:30px;border-radius:4px;background:#117865;color:#fff;display:flex;align-items:center;padding-left:8px}
.menu .share span{height:auto;line-height:28px;margin:0 7px 0 11px;width:36px;font-size:14px;letter-spacing:-.2px}
.groups{display:flex;height:110px;font-size:14px;letter-spacing:-.12px}
.grp{border-right:1px solid #d0d0d0;position:relative;display:flex;flex-direction:column;justify-content:space-between}
.g-clip{width:201px}.g-data{width:450px}.g-query{width:145px}.g-ins{width:184px}.g-calc{width:233px}.g-sens{width:92px}.g-share{width:72px}.g-cop{width:166px}
.tools{display:grid;justify-items:center;padding-top:5px;height:95px}
.g-clip .tools{grid-template-columns:44px 132px;padding-left:13px}
.g-data .tools{grid-template-columns:58px 58px 84px 36px 64px 56px 82px;padding-left:7px}
.g-query .tools{grid-template-columns:90px 34px;padding-left:0}
.g-ins .tools{grid-template-columns:54px 46px 66px;padding-left:8px}
.g-calc .tools{grid-template-columns:98px 54px 68px;padding-left:6px}
.g-sens .tools{grid-template-columns:90px}.g-share .tools{grid-template-columns:70px}
.g-cop .tools{grid-template-columns:110px 36px}
.tool{display:flex;flex-direction:column;align-items:center;text-align:center;line-height:20px;white-space:nowrap;width:0}
.tool>svg{margin-bottom:4px}
.tool .r2{transform:translateX(2px)}.tool .r3{transform:translateX(3px)}.tool .r4{transform:translateX(4px)}.tool .l4{transform:translateX(-4px)}
.tool i{display:inline-block;width:5px;height:5px;border:solid currentColor;border-width:0 2px 2px 0;transform:rotate(45deg);margin:0 1px 3px 4px}
.off{color:#c6c6c6}
.clip{justify-self:start}
.clip div{display:flex;align-items:center;height:30px;white-space:nowrap;letter-spacing:.05px}
.clip svg{margin-right:5px}
.clip{padding-left:8px;margin-top:-5px;line-height:20px}
.cap{font-size:12.5px;line-height:13px;text-align:center;letter-spacing:-.15px}
.fold{margin:97px 6px 0 auto}

/* body columns */
.main{height:790px;flex:none;display:flex}
.rail{width:51px;border-right:1px solid #e1dfdd;border-left:3px solid transparent;border-image:linear-gradient(#117865 50px,transparent 50px) 0 0 0 3;padding:12px 0 0 10px;display:flex;flex-direction:column;gap:26px;flex:none;background:linear-gradient(#e1dfdd,#e1dfdd) right/1px 100% no-repeat}
.rl{fill:none;stroke:#777;stroke-width:1.5}
.rail text{font:700 8px "Open Sans",sans-serif;fill:#777}
.work{width:1417px;display:grid;grid-template-columns:1167px 250px;grid-template-rows:746px 44px;flex:none}
.canvas{background:#fff;overflow:hidden}
.page{height:656px;background:#f1f1f1;border-bottom:3px solid #fff;box-shadow:0 3px 8px rgba(0,0,0,.22);padding:7px 10px 0 11px}
.headcard{height:53px;background:#fff;border-radius:9px;display:flex;justify-content:space-between}
.headline{overflow:visible}
.headline text{font:900 43.5px Roboto,sans-serif;letter-spacing:0;fill:#000;stroke:#000;stroke-width:2}
.sumbtn{width:168px;height:42px;margin:6px 10px 0 0;background:#000;border-radius:10px;color:#eee;font-size:11.5px;letter-spacing:.2px}
.cols{display:flex;justify-content:space-between;margin-top:9px;height:584px}
.profwrap{width:639px;background:linear-gradient(transparent 560px,#7f7c8b 560px);position:relative}
.riskwrap{width:497px;background:linear-gradient(transparent 560px,#4b44f2 560px);position:relative}
.tag{position:absolute;z-index:1;top:-6px;height:22px;border:1px solid #200;border-radius:1px;background:#c00000;color:#fff;font-size:11.5px;font-weight:800;line-height:19px;text-align:center;letter-spacing:-.38px;white-space:nowrap}
.tagl{left:14px;width:204px}.tagr{left:162px;width:173px}
.profile{height:575px;border-radius:12px;background:linear-gradient(138deg,#1f1b92 0,#2c27bf 25%,#342cda 50%,#3a32f0 75%,#3f35ff 100%);padding:16px 9px 0}
.upper,.pair{display:flex}
.upper{height:394px}
.ucol{width:413px}
.chart{box-shadow:inset 0 0 0 1px rgba(190,188,238,.85)}
.chart text{font:11px Roboto,sans-serif;fill:#ededf8;dominant-baseline:central;letter-spacing:.25px}
.chart text.t{font-size:14.5px;font-weight:500;fill:#e6e6f4}
.chart .h{fill:#1a1a30;font-size:10px;text-anchor:middle}
.chart .v{font-size:10px}
.chart .in{fill:#fff}
.e text{text-anchor:end}.m text{text-anchor:middle}
.g{fill:none;stroke:#7f7be0;stroke-dasharray:1.5 3.5}
.b{fill:#e6e6e6;stroke:#aaa8dc;stroke-width:.8}
.kpi text{font-family:Roboto,sans-serif;fill:#fff;letter-spacing:0}
.kpi .big{font-size:49px;font-weight:400;letter-spacing:4.6px}
.kpi .sub{font-size:16px;font-weight:400;fill:#e0e0f6}
.risk{height:584px;background:#fff;padding:20px 3px 0;overflow:hidden;clip-path:inset(0 0 1px 0);border-radius:12px 12px 14px 14px}
.count{font:700 16px/20px Roboto,sans-serif;letter-spacing:-.1px;text-align:center;height:36px}
.tblrow{display:flex}
table{border-collapse:separate;border-spacing:0;table-layout:fixed;width:482px;font:12px Roboto,sans-serif;letter-spacing:.15px;color:#252423}
th{height:31px;background:#4b43f2;color:#e4e4fa;font-weight:400;padding:0 0 4px;border-right:1px solid #827cf6;border-bottom:1px solid #1a78ff;white-space:nowrap;text-align:center}
th:nth-child(1){width:82px}th:nth-child(2){width:101px}th:nth-child(3){width:89px}th:nth-child(4){width:85px}th:nth-child(5){width:125px}
th:nth-child(3){border-right:0}
td{height:22.79px;padding:0 5px;text-align:right;line-height:19px;border-bottom:1px solid transparent}
td:first-child{text-align:left}td:last-child{padding-right:6px}td:nth-child(4){padding-right:4px}
tbody tr:nth-child(even) td{background:#e6e6e6;border-right:1px solid #efefef}
.thumb{width:6px;height:46px;border-radius:3px;background:#b3b0ad;margin:2px 0 0 1px}

/* filters pane */
.filters{background:#fff;border-left:1px solid #b3b0ad;display:flex;flex-direction:column}
.fhead{display:flex;padding:16px 12px 0 15px;height:58px}
.fhead b,.phead b{font-size:18px;font-weight:600;line-height:20px;letter-spacing:0}
.fhead b{margin:0 auto 0 11px}
.eye{margin:0 23px 0 0}
.ch{fill:none;stroke:#222;stroke-width:1.5}
.fsearch{margin:0 0 0 10px;width:224px;height:43px;border:1px solid #a6a4a2;border-radius:2px;display:flex;align-items:center;padding-left:12px;font-size:15.5px;letter-spacing:.1px}
.fsearch svg{margin-top:-4px}
.fsearch span{margin-left:11px}
.fbody{margin-top:5px;border-top:1px solid #a6a4a2;padding:21px 0 0 10px}
.flab{display:flex;line-height:20px;height:32px;width:224px;justify-content:space-between}
.two{margin-top:33px}
.flab,.fbox,.wells,.data ul{font-size:14px;letter-spacing:.07px}
.dots{letter-spacing:2px!important;margin-right:-2px}
.fbox{width:229px;height:57px;border:1px solid #c8c6c4;border-radius:2px;display:flex;align-items:center;justify-content:center}

/* page tabs */
.tabs{grid-column:1/3;background:#f3f2f1;display:flex;line-height:45px;text-align:center;white-space:nowrap}
.tabs .dev{margin:0 0 0 -1px}
.tab{background:#fff;border-left:1px solid #c8c6c4;font-size:14px;letter-spacing:-.2px}
.ta{width:112px;border-left-color:#888}.tbb{width:135px}
.tc{width:165px;border-bottom:5px solid #117865;font-weight:700;letter-spacing:-.25px;position:relative}
.tc em{position:absolute;right:6px;top:-12px;font-style:normal;font-size:14px}
.plus{width:50px;background:#117865;display:flex;align-items:center;justify-content:center}

/* visualizations pane */
.viz{width:226px;border-left:1px solid #dcdad8;border-right:1px solid #dcdad8;flex:none}
.phead{display:flex;justify-content:space-between;padding:16px 9px 0 10px;height:49px}
.phead svg{margin-top:2px}
.build{font-weight:700;font-size:13.5px;letter-spacing:-.3px;line-height:20px;padding-left:10px;height:24px}
.modes{display:flex;padding-left:10px;height:45px}
.mode{width:40px;height:40px;border-radius:2px;background:#d2d0ce;padding:4px}
.fmt{margin:4px 0 0 47px}
.notch{margin-left:-1px}
.icons{display:grid;grid-template-columns:repeat(6,24px);grid-auto-rows:24px;gap:11px;padding:13px 0 0 14px}
.icons svg{width:24px;height:24px;overflow:visible}
.a{fill:none;stroke:#3b3a39;stroke-width:1.4}
.w{fill:#fff;stroke:#3b3a39;stroke-width:1.2}
.bl{fill:#83bceb;stroke:#1664a7;stroke-width:1.2}
.gr{fill:#c8c6c4;stroke:#777;stroke-width:1.1}
.bs{fill:none;stroke:#1a78c2;stroke-width:1.4}
.bo{fill:#ffd47a;stroke:#d9680c;stroke-width:1.2}
.icons text{font-size:10.5px;fill:#2a8fd4;text-anchor:middle;letter-spacing:-.3px}
.icons .lang{font-size:20px;font-weight:700;fill:#2682bc}
.more{font-size:17px;font-weight:600;letter-spacing:3.2px;line-height:20px;height:26px;padding:5px 0 0 14px;margin-top:1px}
.wells{border-top:1px solid #dcdad8;padding-left:5px;margin-top:17px}
.wl{line-height:20px;padding:12px 0 6px 10px}
.well{width:213px;height:35px;border:1px dashed #bfbdbb;background:#fff;line-height:32px;padding-left:13px}
.drill{font-weight:700;letter-spacing:-.15px;color:#484644;line-height:20px;padding:14px 0 11px 10px}
.tog{display:flex;justify-content:space-between;width:193px;padding-left:10px;line-height:20px;height:20px}
.t2{margin:14px 0 13px}
.sw{width:40px;height:20px;border:1px solid #8a8886;border-radius:10px;background:#fff;font-size:10.5px;line-height:19px;display:flex;align-items:center;justify-content:center;gap:2px;color:#555}
.sw u{width:10px;height:10px;border-radius:5px;background:#605e5c}
.swon{background:#117865;border-color:#117865;color:#fff}.swon u{background:#fff}
.w2{height:33px;line-height:30px;padding-left:10px;letter-spacing:.13px}

/* data pane */
.data{width:226px}
.data .phead{padding:16px 9px 0 11px;height:59px}
.dsearch{margin-left:6px;width:214px;height:29px;border:1px solid #d1d1d1;border-bottom-color:#777;border-radius:4px;background:#fff;display:flex;align-items:center;padding-left:14px;font-size:15.5px;color:#616161;letter-spacing:.1px}
.dsearch span{margin-left:8px}
.data ul{list-style:none;margin:11px 0 0;padding:0 0 0 21px}
.data li{height:30px;display:flex;align-items:center;line-height:20px}
.tr{width:30px;height:16px;margin-right:8px}
.tr path{fill:none;stroke:#444;stroke-width:1.2}

/* status bar */
.status{height:29px;flex:none;border-top:1px solid #dedcda;display:flex;align-items:center;padding:3px 22px 0 5px;color:#484644;letter-spacing:.1px}
.status span:first-child{margin-right:auto}
.pct{width:27px;margin:0 26px 0 15px;letter-spacing:-.6px}

/* taskbar */
.taskbar{height:61px;flex:none;border-top:1px solid #000;background:radial-gradient(ellipse 110px 60px at 1340px 30px,#2d2224,transparent),#202221;color:#f2f2f2;display:flex;align-items:center}
.weather{width:461px;padding-left:24px;display:flex;line-height:20px;gap:6px;letter-spacing:.05px}
.weather svg{margin-top:-2px}
.weather span{color:#ccc}
.start{width:56px;display:flex;justify-content:center}
.tsearch{margin-left:4px;width:275px;height:41px;border:1px solid #4e4e4e;border-radius:21px;background:#3a3a3a;display:flex;align-items:center;padding-left:14px;font-size:16.5px;color:#ccc}
.tsearch span{margin-left:11px}
.apps{display:flex;margin-left:2px}
.apps>div{width:55px;height:50px;display:flex;align-items:center;justify-content:center;position:relative}
.apps svg{width:30px;height:30px}
.apps b{position:absolute;left:28px;top:-1px;width:25px;height:21px;border-radius:11px;background:#f0605c;color:#222;font-weight:400;font-size:14px;line-height:20px;text-align:center}
.run::after{content:"";position:absolute;left:24px;bottom:1px;width:8px;height:4px;border-radius:2px;background:#9a9a9a}
.cur::before{content:"";position:absolute;left:2px;top:0;width:50px;height:50px;border-radius:5px;background:#2f2f2f;border:1px solid #3c3c3c}
.cur svg{position:relative}
.cur::after{left:17px;width:20px;background:#f0605c}
.tray{display:flex;align-items:center;margin-left:auto;padding-right:25px;line-height:20px;letter-spacing:0}
.tray .lang{width:36px;margin:0 20px 0 23px;text-align:center;letter-spacing:-.3px}
.tray svg+svg{margin-left:10px}
.clock{width:84px;margin:0 11px 0 14px;text-align:right;white-space:nowrap}
```
